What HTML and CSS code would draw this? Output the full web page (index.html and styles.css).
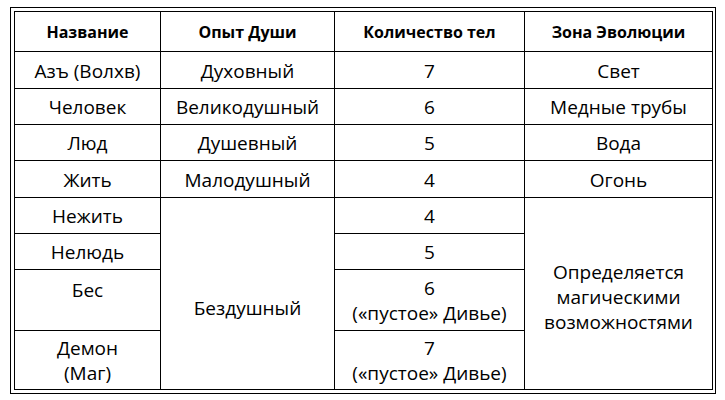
FILE: index.html
```html
<!DOCTYPE html>
<html lang="ru">
<head>
<meta charset="utf-8">
<link rel="stylesheet" href="styles.css">
</head>
<body>
<div class="frame">
<table class="grid">
  <colgroup>
    <col class="c1"><col class="c2"><col class="c3"><col class="c4">
  </colgroup>
  <thead>
    <tr class="h-head">
      <th>Название</th><th>Опыт Души</th><th>Количество тел</th><th>Зона Эволюции</th>
    </tr>
  </thead>
  <tbody>
    <tr class="h37"><td>Азъ (Волхв)</td><td>Духовный</td><td>7</td><td>Свет</td></tr>
    <tr class="h36"><td>Человек</td><td>Великодушный</td><td>6</td><td>Медные трубы</td></tr>
    <tr class="h36"><td>Люд</td><td>Душевный</td><td>5</td><td>Вода</td></tr>
    <tr class="h37"><td>Жить</td><td>Малодушный</td><td>4</td><td>Огонь</td></tr>
    <tr class="h36"><td>Нежить</td><td rowspan="5" class="soulless">Бездушный</td><td>4</td><td rowspan="5" class="magic">Определяется<br>магическими<br>возможностями</td></tr>
    <tr class="h36"><td>Нелюдь</td><td>5</td></tr>
    <tr class="h61"><td class="top">Бес</td><td>6<br>(«пустое» Дивье)</td></tr>
    <tr class="h59"><td>Демон<br>(Маг)</td><td>7<br>(«пустое» Дивье)</td></tr>
  </tbody>
</table>
</div>
</body>
</html>
```

FILE: styles.css
```css
html, body {
  margin: 0;
  padding: 0;
  background: #fff;
}
body {
  padding: 7px 0 0 10px;
  font-family: "Open Sans", "Noto Sans", sans-serif;
  color: #000;
}
.frame {
  width: 698px;
  border: 1px solid #000;
  padding: 3px;
}
.grid {
  width: 698px;
  table-layout: fixed;
  border-collapse: collapse;
  border: 1px solid #000;
}
.c1 { width: 146px; }
.c2 { width: 174px; }
.c3 { width: 190px; }
.c4 { width: 188px; }
.grid th,
.grid td {
  border: 1px solid #000;
  text-align: center;
  vertical-align: middle;
  padding: 2px 0 0 0;
  line-height: 25px;
}
.grid th {
  font-size: 16px;
  font-weight: 700;
}
.grid td {
  font-size: 19px;
}
.h-head { height: 40px; }
.h37 { height: 37px; }
.h36 { height: 36px; }
.h61 { height: 61px; }
.h59 { height: 59px; }
.grid td.top {
  vertical-align: top;
  padding-top: 8px;
}
.grid td.soulless {
  padding-top: 30px;
}
.grid td.magic {
  padding-top: 8px;
}
```
